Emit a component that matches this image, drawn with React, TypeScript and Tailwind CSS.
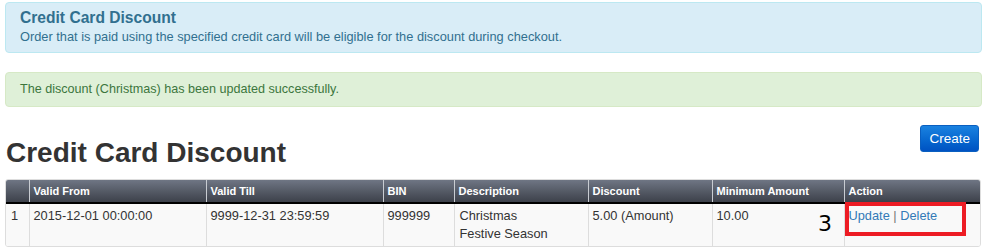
import React from 'react';

const columns = [
  { label: '', width: 23 },
  { label: 'Valid From', width: 177 },
  { label: 'Valid Till', width: 177 },
  { label: 'BIN', width: 71 },
  { label: 'Description', width: 134 },
  { label: 'Discount', width: 124 },
  { label: 'Minimum Amount', width: 132 },
  { label: 'Action', width: 138 },
];

const discounts = [
  {
    id: 1,
    validFrom: '2015-12-01 00:00:00',
    validTill: '9999-12-31 23:59:59',
    bin: '999999',
    description: ['Christmas', 'Festive Season'],
    discount: '5.00 (Amount)',
    minAmount: '10.00',
  },
];

export default function App() {
  return (
    <div className="w-[985px] h-[251px] bg-white px-[5px] pt-[2px] text-[#333] font-['Liberation_Sans',Arial,sans-serif] overflow-hidden">
      {/* Info panel */}
      <div className="w-[977px] h-[51px] rounded-[4px] border border-[#bce8f1] bg-[#d9edf7] px-[14px] pt-[5px] text-[#31708f]">
        <h4 className="text-[15.6px] font-bold leading-[20px]">Credit Card Discount</h4>
        <p className="text-[12.8px] leading-[18px]">
          Order that is paid using the specified credit card will be eligible for the discount during checkout.
        </p>
      </div>

      {/* Flash message */}
      <div className="mt-[19px] w-[977px] h-[35px] rounded-[4px] border border-[#d6e9c6] bg-[#dff0d8] px-[14px] flex items-center text-[12.6px] text-[#3c763d]">
        The discount (Christmas) has been updated successfully.
      </div>

      <div className="flex justify-end mt-[18px] pr-[1px]">
        <button className="h-[27px] px-[8px] rounded-[3px] border border-[#0a5fc0] bg-gradient-to-b from-[#1a82e0] to-[#0052c2] text-white text-[13.5px] leading-none">
          Create
        </button>
      </div>

      <h1 className="-mt-[14px] text-[28px] font-bold leading-[30px] text-[#333] pl-[1px]">Credit Card Discount</h1>

      <div className="relative mt-[11px] w-[976px] rounded-[3px] border border-[#ddd] overflow-hidden">
        <table className="w-full border-collapse table-fixed">
          <colgroup>
            {columns.map((c) => (
              <col key={c.label} style={{ width: c.width }} />
            ))}
          </colgroup>
          <thead>
            <tr className="bg-gradient-to-b from-[#6f7684] to-[#3b3f48]">
              {columns.map((c, i) => (
                <th
                  key={c.label}
                  className={`h-[23px] px-[4px] text-left text-[11px] font-bold text-white border-b-2 border-b-black ${i > 0 ? 'border-l border-l-[#c8ccd2]' : ''}`}
                >
                  {c.label}
                </th>
              ))}
            </tr>
          </thead>
          <tbody>
            {discounts.map((d) => (
              <tr key={d.id} className="bg-[#f9f9f9] text-[12.8px] leading-[18px] align-top">
                <td className="h-[43px] pl-[5px] pt-[3px]">{d.id}</td>
                <td className="border-l border-[#ddd] pl-[4px] pt-[3px]">{d.validFrom}</td>
                <td className="border-l border-[#ddd] pl-[4px] pt-[3px]">{d.validTill}</td>
                <td className="border-l border-[#ddd] pl-[4px] pt-[3px]">{d.bin}</td>
                <td className="border-l border-[#ddd] pl-[5px] pt-[3px]">
                  {d.description.map((line) => (
                    <div key={line}>{line}</div>
                  ))}
                </td>
                <td className="border-l border-[#ddd] pl-[4px] pt-[3px]">{d.discount}</td>
                <td className="border-l border-[#ddd] pl-[4px] pt-[3px]">{d.minAmount}</td>
                <td className="border-l border-[#ddd] pl-[4px] pt-[3px]">
                  <a className="text-[#337ab7]">Update</a>
                  <span className="text-[#777]"> | </span>
                  <a className="text-[#337ab7]">Delete</a>
                </td>
              </tr>
            ))}
          </tbody>
        </table>

        {/* screenshot annotation */}
        <span className="absolute left-[812px] top-[33px] text-[22px] leading-none text-black font-['DejaVu_Sans',sans-serif]">3</span>
        <div className="absolute left-[839px] top-[22px] w-[121px] h-[34px] border-[4px] border-[#ed1c24]" />
      </div>
    </div>
  );
}
